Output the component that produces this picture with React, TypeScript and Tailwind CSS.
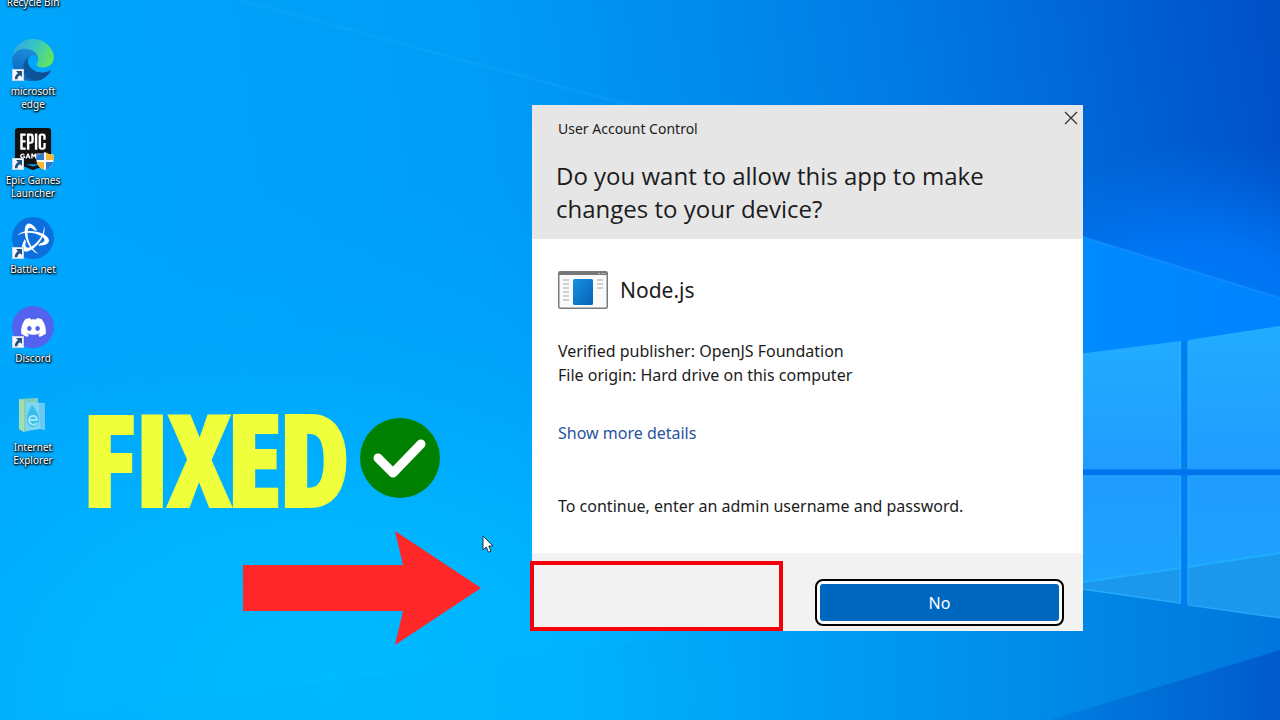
import type { ReactNode } from "react";
import { FaDiscord } from "react-icons/fa";
import { SiBattledotnet, SiEpicgames } from "react-icons/si";

function Wallpaper() {
  return (
    <svg
      className="absolute inset-0 h-full w-full"
      viewBox="0 0 1280 720"
      preserveAspectRatio="none"
      aria-hidden="true"
    >
      <defs>
        <linearGradient id="base" x1="0" y1="0.08" x2="1" y2="0">
          <stop offset="0" stopColor="#00a6fc" />
          <stop offset="0.36" stopColor="#009df7" />
          <stop offset="0.55" stopColor="#008bed" />
          <stop offset="0.72" stopColor="#0078e2" />
          <stop offset="0.86" stopColor="#0063d4" />
          <stop offset="1" stopColor="#004fc6" />
        </linearGradient>
        <radialGradient id="glow" gradientUnits="userSpaceOnUse" cx="0" cy="0" r="1" gradientTransform="translate(330 690) scale(760 520)">
          <stop offset="0" stopColor="#00bbff" />
          <stop offset="0.35" stopColor="#00b5ff" stopOpacity="0.9" />
          <stop offset="0.7" stopColor="#00a9fd" stopOpacity="0.5" />
          <stop offset="1" stopColor="#00a4ff" stopOpacity="0" />
        </radialGradient>
        <radialGradient id="halo" gradientUnits="userSpaceOnUse" cx="1200" cy="430" r="290">
          <stop offset="0" stopColor="#0088ff" />
          <stop offset="0.65" stopColor="#007cff" stopOpacity="0.75" />
          <stop offset="1" stopColor="#0070f0" stopOpacity="0" />
        </radialGradient>
        <linearGradient id="beam" x1="0" y1="0" x2="1" y2="0">
          <stop offset="0" stopColor="#0096ff" stopOpacity="0" />
          <stop offset="0.4" stopColor="#008cff" />
          <stop offset="1" stopColor="#0084ff" />
        </linearGradient>
        <linearGradient id="under" x1="0" y1="0" x2="1" y2="0">
          <stop offset="0" stopColor="#00adf8" stopOpacity="0" />
          <stop offset="0.3" stopColor="#009cf2" />
          <stop offset="0.65" stopColor="#008ae8" />
          <stop offset="1" stopColor="#0076dc" />
        </linearGradient>
        <linearGradient id="corner" x1="0" y1="0" x2="1" y2="0">
          <stop offset="0" stopColor="#007ee2" />
          <stop offset="0.4" stopColor="#0070d8" />
          <stop offset="1" stopColor="#005acb" />
        </linearGradient>
        <linearGradient id="pane" x1="0" y1="0" x2="0" y2="1">
          <stop offset="0" stopColor="#22acff" />
          <stop offset="1" stopColor="#209cff" />
        </linearGradient>
        <linearGradient id="paneLow" x1="0" y1="0" x2="0" y2="1">
          <stop offset="0" stopColor="#209cff" />
          <stop offset="1" stopColor="#1ca4ff" />
        </linearGradient>
      </defs>
      <rect width="1280" height="720" fill="url(#base)" />
      <rect width="1280" height="720" fill="url(#glow)" />
      <path d="M240 0 640 108" stroke="#38b4ff" strokeWidth="3" opacity="0.15" />
      <rect x="900" y="140" width="380" height="580" fill="url(#halo)" />
      <path d="M880 174 1280 298V600H880Z" fill="url(#beam)" />
      <path d="M1083 237 1280 298" stroke="#2a9cff" strokeWidth="2" opacity="0.4" />
      <path d="M640 570H960L1083 589 1280 618V720H640Z" fill="url(#under)" />
      <path d="M1050 720 1280 650V720Z" fill="url(#corner)" />
      <path d="M30 720 700 635V720Z" fill="#0096e8" opacity="0.07" />
      <path d="M1070 355 1181 341V469H1070Z" fill="url(#pane)" />
      <path d="M1188 340 1280 326V469H1188Z" fill="url(#pane)" />
      <path d="M1070 476H1181V604L1070 588Z" fill="url(#paneLow)" />
      <path d="M1188 476H1280V618L1188 605Z" fill="url(#paneLow)" />
      <path d="M1083 582 1181 568V604L1083 589Z" fill="#1b98ee" />
      <path d="M1188 567 1280 553V618L1188 605Z" fill="#1b98ee" />
      <path d="M1083 582 1181 568M1188 567 1280 553" stroke="#20b2ff" strokeWidth="2" opacity="0.8" />
      <path
        d="M1180 342V468M1188 341V468M1180 477V603M1188 477V604M1188 476H1280M1083 476H1180M1083 589 1181 603M1188 605 1280 618"
        stroke="#30b0ff"
        strokeWidth="1.5"
        fill="none"
        opacity="0.6"
      />
      <path d="M1182 341H1187V605H1182Z" fill="#0080ee" />
      <path d="M1083 470H1280V475H1083Z" fill="#0074ea" />
    </svg>
  );
}

function ShortcutBadge() {
  return (
    <svg className="absolute bottom-0 left-0 size-3" viewBox="0 0 12 12" aria-hidden="true">
      <rect x="0.5" y="0.5" width="11" height="11" fill="#f4f8fc" stroke="#c2d6e8" />
      <path d="M4 2h6v6L8 6.200C6.500 7 5.500 8.300 5.400 10.200H2.800C2.700 7.500 4 5.300 6 4.200Z" fill="#24507f" />
    </svg>
  );
}

function EdgeIcon() {
  return (
    <svg className="size-[42px]" viewBox="4 1 258 258" aria-hidden="true">
      <defs>
        <linearGradient id="edgeDark" x1="0" y1="0" x2="1" y2="0">
          <stop offset="0" stopColor="#0c59a4" />
          <stop offset="1" stopColor="#114a8b" />
        </linearGradient>
        <linearGradient id="edgeMid" x1="0.6" y1="0" x2="0.3" y2="1">
          <stop offset="0" stopColor="#1b8fd8" />
          <stop offset="0.5" stopColor="#1478cf" />
          <stop offset="1" stopColor="#0c63b8" />
        </linearGradient>
        <linearGradient id="edgeTop" x1="0" y1="0.3" x2="1" y2="0.6">
          <stop offset="0" stopColor="#35a9e2" />
          <stop offset="0.5" stopColor="#36c6c4" />
          <stop offset="1" stopColor="#66e658" />
        </linearGradient>
      </defs>
      <path
        fill="url(#edgeDark)"
        d="M235.680 195.460a93.730 93.730 0 01-10.540 4.710 101.870 101.870 0 01-35.900 6.460c-47.320 0-88.540-32.550-88.540-74.320A31.480 31.480 0 01117.130 105c-42.800 1.800-53.800 46.400-53.800 72.530 0 73.880 68.090 81.370 82.760 81.370 7.910 0 19.840-2.300 27-4.560l1.310-.440a128.340 128.340 0 0066.600-52.800 4 4 0 00-5.320-5.640z"
      />
      <path
        fill="url(#edgeMid)"
        d="M110.340 246.340A79.200 79.200 0 0187.600 225a80.720 80.720 0 0129.530-120c3.120-1.470 8.450-4.130 15.540-4a32.350 32.350 0 0125.690 13 31.880 31.880 0 016.360 18.660c0-.210 24.460-79.600-80-79.600-43.900 0-80 41.660-80 78.210a130.150 130.150 0 0012.110 56 128 128 0 00156.380 67.110 75.550 75.550 0 01-62.780-8z"
      />
      <path
        fill="url(#edgeTop)"
        d="M156.940 153.780c-.810 1.050-3.300 2.500-3.300 5.660 0 2.610 1.700 5.120 4.720 7.230 14.380 10 41.490 8.680 41.560 8.680a59.560 59.560 0 0030.270-8.350 61.380 61.380 0 0030.430-52.880c.260-22.410-8-37.310-11.340-43.910C228.090 28.760 182.350.200 132.610.200a128 128 0 00-128 126.200c.480-36.540 36.800-66.050 80-66.050 3.500 0 23.460.340 42 10.070 16.340 8.580 24.900 18.940 30.850 29.210 6.180 10.670 7.280 24.150 7.280 29.520s-2.740 13.330-7.800 19.910z"
      />
    </svg>
  );
}

function EpicIcon() {
  return (
    <span className="relative flex size-[42px] items-center justify-center">
      <span className="absolute inset-x-2 top-1 h-8 bg-white" />
      <SiEpicgames className="relative size-[42px] text-[#121212]" aria-hidden="true" />
      <svg className="absolute right-0 bottom-0 size-[18px]" viewBox="0 0 18 18" aria-hidden="true">
        <clipPath id="shield">
          <path d="M9 0C6.500 1.800 3.500 2.500.500 2.500V8c0 5 3.500 8.200 8.500 10 5-1.800 8.500-5 8.500-10V2.500C14.500 2.500 11.500 1.800 9 0Z" />
        </clipPath>
        <g clipPath="url(#shield)">
          <rect width="18" height="18" fill="#f5f7fa" />
          <path d="M0 0h8v8H0Z" fill="#2c7bd0" />
          <path d="M10 0h8v8h-8Z" fill="#f7b733" />
          <path d="M0 10h8v8H0Z" fill="#f7b733" />
          <path d="M10 10h8v8h-8Z" fill="#2c7bd0" />
        </g>
      </svg>
    </span>
  );
}

function ExplorerIcon() {
  return (
    <svg className="size-[42px]" viewBox="0 0 42 42" aria-hidden="true">
      <path d="M7 4 26 3v30L12 37 7 34Z" fill="#7fcfc0" />
      <path d="M7 4 12 6v31l-5-3Z" fill="#a5dcb0" />
      <path d="M14 7 33 8v27l-4-1-15 2Z" fill="#7fd6f2" />
      <path d="M27 8h6v27l-5-1Z" fill="#68c9f2" />
      <path d="M20 10c-4 7-5 10-5 14 0 5 3 8 6 8s6-3 6-8-4-10-7-14Z" fill="#38bdec" />
      <path d="M25 28c-2 3-8 2-8-3s8-6 8 0h-7" fill="none" stroke="#a6e8fb" strokeWidth="1.800" />
    </svg>
  );
}

function DesktopIcon({ label, shortcut = true, children }: { label: string; shortcut?: boolean; children: ReactNode }) {
  return (
    <a
      href="#"
      className="flex h-[89px] w-full flex-col items-center text-center text-[10px] leading-[13px] text-white [text-shadow:0_1px_2px_#000,1px_1px_2px_#000,0_0_2px_#000]"
    >
      <span className="relative mb-1 flex size-[42px] shrink-0 items-center justify-center">
        {children}
        {shortcut && <ShortcutBadge />}
      </span>
      <span className="w-15">{label}</span>
    </a>
  );
}

function DialogWindow() {
  return (
    <section
      role="dialog"
      aria-labelledby="question"
      className="absolute top-[105px] left-[532px] w-[551px] bg-white text-[#1c1c1c]"
    >
      <header className="flex h-[134px] items-start justify-between bg-[#e6e6e6] pt-3.5 pl-6">
        <div>
          <p className="pl-0.5 text-[14px] leading-5">User Account Control</p>
          <h1 id="question" className="mt-5 w-[440px] font-['Open_Sans','Noto_Sans',sans-serif] text-[24px] leading-[33px]">
            Do you want to allow this app to make changes to your device?
          </h1>
        </div>
        <button type="button" aria-label="Close" className="-mt-3.5 flex size-6 items-center justify-center">
          <svg className="mt-0.5 size-3.5" viewBox="0 0 14 14" aria-hidden="true">
            <path d="M1 1 13 13M13 1 1 13" stroke="#333" strokeWidth="1.300" />
          </svg>
        </button>
      </header>

      <div className="flex h-[314px] flex-col items-start px-[26px] pt-[31px] text-[16px] leading-6">
        <div className="flex items-center gap-3">
          <svg className="h-[38px] w-[50px]" viewBox="0 0 50 38" aria-hidden="true">
            <defs>
              <linearGradient id="appBlue" x1="0" y1="0" x2="1" y2="1">
                <stop offset="0" stopColor="#168fe0" />
                <stop offset="1" stopColor="#0763b8" />
              </linearGradient>
            </defs>
            <rect x="0.750" y="0.750" width="48.500" height="36.500" rx="1.500" fill="#fafafa" stroke="#7a7a7a" strokeWidth="1.500" />
            <path d="M1 1h48v3H1Z" fill="#767676" />
            <path d="M40 2.500h2M43.500 2.500h2M46.500 2.500h1" stroke="#c4c4c4" />
            <path d="M5 9h6M5 13h6M5 17h6M5 21h6M5 25h6M5 29h6M39 9h6M39 13h6M39 17h6" stroke="#a5a5a5" strokeWidth="1.200" />
            <rect x="15" y="8" width="20" height="26" rx="1.500" fill="url(#appBlue)" />
          </svg>
          <h2 className="text-[21px] leading-10">Node.js</h2>
        </div>
        <p className="mt-[29px]">Verified publisher: OpenJS Foundation</p>
        <p>File origin: Hard drive on this computer</p>
        <a href="#" className="mt-[34px] text-[#27549c]">
          Show more details
        </a>
        <p className="mt-[49px]">To continue, enter an admin username and password.</p>
      </div>

      <footer className="flex h-[78px] justify-end bg-[#f2f2f2] pt-[26px] pr-[19px]">
        <button
          type="button"
          className="h-[47px] w-[249px] rounded-lg border-2 border-black bg-white p-[3px] text-[16px] text-white"
        >
          <span className="flex h-full items-center justify-center rounded-[3px] bg-[#0067c0]">No</span>
        </button>
      </footer>
    </section>
  );
}

export default function App() {
  return (
    <main className="relative h-screen overflow-hidden font-['Noto_Sans','Open_Sans',sans-serif]">
      <Wallpaper />

      <nav aria-label="Desktop" className="absolute -top-[50px] left-0 flex w-[66px] flex-col items-center">
        <DesktopIcon label="Recycle Bin" shortcut={false}>
          <span />
        </DesktopIcon>
        <DesktopIcon label="microsoft edge">
          <EdgeIcon />
        </DesktopIcon>
        <DesktopIcon label="Epic Games Launcher">
          <EpicIcon />
        </DesktopIcon>
        <DesktopIcon label="Battle.net">
          <span className="flex size-[42px] items-center justify-center rounded-full bg-[#0d6fdc]">
            <SiBattledotnet className="size-[31px]" aria-hidden="true" />
          </span>
        </DesktopIcon>
        <DesktopIcon label="Discord">
          <span className="flex size-[42px] items-center justify-center rounded-full bg-[#5462f0]">
            <FaDiscord className="size-[27px]" aria-hidden="true" />
          </span>
        </DesktopIcon>
        <DesktopIcon label="Internet Explorer" shortcut={false}>
          <ExplorerIcon />
        </DesktopIcon>
      </nav>

      <DialogWindow />

      <div className="absolute top-[561px] left-[530px] h-[70px] w-[253px] border-4 border-[#f5000a]" />

      <div className="absolute top-[396px] left-[84px] flex items-start gap-3">
        <strong className="font-['Open_Sans_Condensed','Open_Sans',sans-serif] text-[122px] leading-[124px] font-bold text-[#f0ff3c] [-webkit-text-stroke:6px_#f0ff3c]">
          FIXED
        </strong>
        <svg className="mt-[22px] size-20" viewBox="0 0 80 80" aria-hidden="true">
          <circle cx="40" cy="40" r="40" fill="#008000" />
          <path d="M18 40 33 55 61 26" fill="none" stroke="#fff" strokeWidth="9" strokeLinecap="round" strokeLinejoin="round" />
        </svg>
      </div>

      <svg className="absolute top-[530px] left-[243px] h-[116px] w-[239px]" viewBox="0 0 239 116" aria-hidden="true">
        <path d="M0 35H160L152 1 238 58 152 115 160 81H0Z" fill="#ff2727" />
      </svg>

      <svg className="absolute top-[535px] left-[482px] h-[19px] w-3" viewBox="0 0 12 19" aria-hidden="true">
        <path d="M1 1V15L4.300 12 6.500 17.300 9 16.200 6.800 11H11Z" fill="#fff" stroke="#1c3444" />
      </svg>
    </main>
  );
}
